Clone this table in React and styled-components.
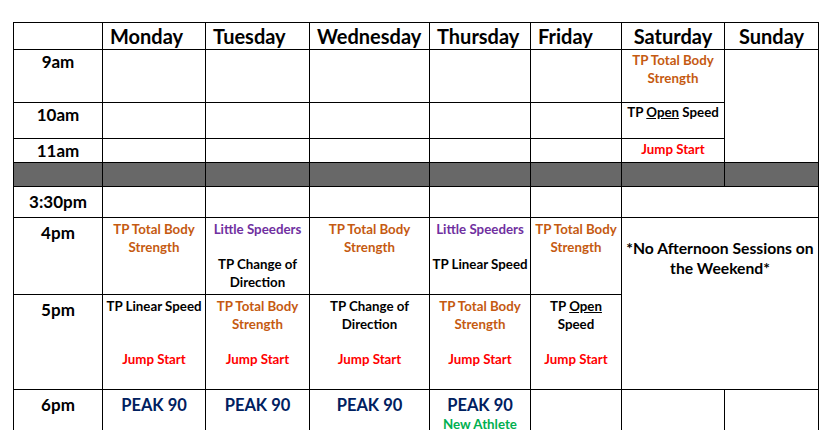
import React from "react";
import styled, { createGlobalStyle } from "styled-components";

const GlobalStyle = createGlobalStyle`
  html, body {
    margin: 0;
    background: #ffffff;
  }
  body {
    font-family: Lato, "Open Sans", sans-serif;
    overflow: hidden;
  }
`;

const Page = styled.div`
  padding: 22px 0 0 13px;
  height: 430px;
  box-sizing: border-box;
  overflow: hidden;
`;

const Table = styled.table`
  border-collapse: collapse;
  table-layout: fixed;
  width: 805px;
  font-weight: 700;
`;

const Row = styled.tr`
  height: ${(p) => p.$h}px;
`;

const Cell = styled.td`
  border: 1px solid #000;
  padding: ${(p) => p.$pt ?? 3}px 1px 0;
  vertical-align: top;
  text-align: center;
  background: ${(p) => (p.$gray ? "#686868" : "#fff")};
`;

const HeadCell = styled.th`
  border: 1px solid #000;
  padding: 0 ${(p) => (p.$center ? 0 : 7)}px 1px;
  text-align: ${(p) => (p.$center ? "center" : "left")};
  vertical-align: middle;
  font-size: 20px;
  font-weight: 700;
  color: #000;
  white-space: nowrap;
`;

const Time = styled(Cell)`
  font-size: 17px;
  line-height: 22px;
  color: #000;
`;

const Line = styled.div`
  font-size: 13.3px;
  line-height: 17.5px;
  height: 17.5px;
  white-space: nowrap;
  color: ${(p) => p.$c || "#000"};
`;

const Note = styled.div`
  font-size: 15.7px;
  line-height: 20px;
  color: #000;
  white-space: nowrap;
`;

const Peak = styled.div`
  font-size: 16.5px;
  line-height: 22px;
  color: #002060;
`;

const Under = styled.span`
  text-decoration: underline;
`;

const ORANGE = "#c55a11";
const PURPLE = "#7030a0";
const RED = "#ff0000";
const GREEN = "#00b050";

const strength = [
  { t: "TP Total Body", c: ORANGE },
  { t: "Strength", c: ORANGE },
];
const openSpeed = (
  <>
    TP <Under>Open</Under> Speed
  </>
);

function Lines({ items }) {
  return items.map((l, i) => (
    <Line key={i} $c={l.c}>
      {l.t}
    </Line>
  ));
}

const blank = { t: "" };
const jump = { t: "Jump Start", c: RED };

const fourPm = [
  strength,
  [{ t: "Little Speeders", c: PURPLE }, blank, { t: "TP Change of" }, { t: "Direction" }],
  strength,
  [{ t: "Little Speeders", c: PURPLE }, blank, { t: "TP Linear Speed" }],
  strength,
];

const fivePm = [
  [{ t: "TP Linear Speed" }, blank, blank, jump],
  [...strength, blank, jump],
  [{ t: "TP Change of" }, { t: "Direction" }, blank, jump],
  [...strength, blank, jump],
  [{ t: <>TP <Under>Open</Under></> }, { t: "Speed" }, blank, jump],
];

const days = ["Monday", "Tuesday", "Wednesday", "Thursday", "Friday"];
const widths = [89, 103, 104, 120, 101, 91, 103, 94];

function Empty({ n }) {
  return Array.from({ length: n }, (_, i) => <Cell key={i} />);
}

export default function App() {
  return (
    <Page>
      <GlobalStyle />
      <Table>
        <colgroup>
          {widths.map((w, i) => (
            <col key={i} style={{ width: w }} />
          ))}
        </colgroup>
        <tbody>
          <Row $h={27}>
            <HeadCell />
            {days.map((d) => (
              <HeadCell key={d}>{d}</HeadCell>
            ))}
            <HeadCell $center>Saturday</HeadCell>
            <HeadCell $center>Sunday</HeadCell>
          </Row>
          <Row $h={53}>
            <Time $pt={1}>9am</Time>
            <Empty n={5} />
            <Cell $pt={2}>
              <Lines items={strength} />
            </Cell>
            <Cell rowSpan={3} />
          </Row>
          <Row $h={36}>
            <Time $pt={1}>10am</Time>
            <Empty n={5} />
            <Cell $pt={1}>
              <Line>{openSpeed}</Line>
            </Cell>
          </Row>
          <Row $h={24}>
            <Time $pt={1}>11am</Time>
            <Empty n={5} />
            <Cell $pt={2}>
              <Lines items={[jump]} />
            </Cell>
          </Row>
          <Row $h={24}>
            {Array.from({ length: 8 }, (_, i) => (
              <Cell key={i} $gray />
            ))}
          </Row>
          <Row $h={31}>
            <Time $pt={4}>3:30pm</Time>
            <Empty n={5} />
            <Cell colSpan={2} />
          </Row>
          <Row $h={77}>
            <Time $pt={4}>4pm</Time>
            {fourPm.map((items, i) => (
              <Cell key={i}>
                <Lines items={items} />
              </Cell>
            ))}
            <Cell colSpan={2} rowSpan={2} $pt={20}>
              <Note>
                *No Afternoon Sessions on
                <br />
                the Weekend*
              </Note>
            </Cell>
          </Row>
          <Row $h={95}>
            <Time $pt={4}>5pm</Time>
            {fivePm.map((items, i) => (
              <Cell key={i}>
                <Lines items={items} />
              </Cell>
            ))}
          </Row>
          <Row $h={60}>
            <Time $pt={4}>6pm</Time>
            {[0, 1, 2].map((i) => (
              <Cell key={i} $pt={4}>
                <Peak>PEAK 90</Peak>
              </Cell>
            ))}
            <Cell $pt={4}>
              <Peak>PEAK 90</Peak>
              <Line $c={GREEN}>New Athlete</Line>
            </Cell>
            <Empty n={3} />
          </Row>
        </tbody>
      </Table>
    </Page>
  );
}
